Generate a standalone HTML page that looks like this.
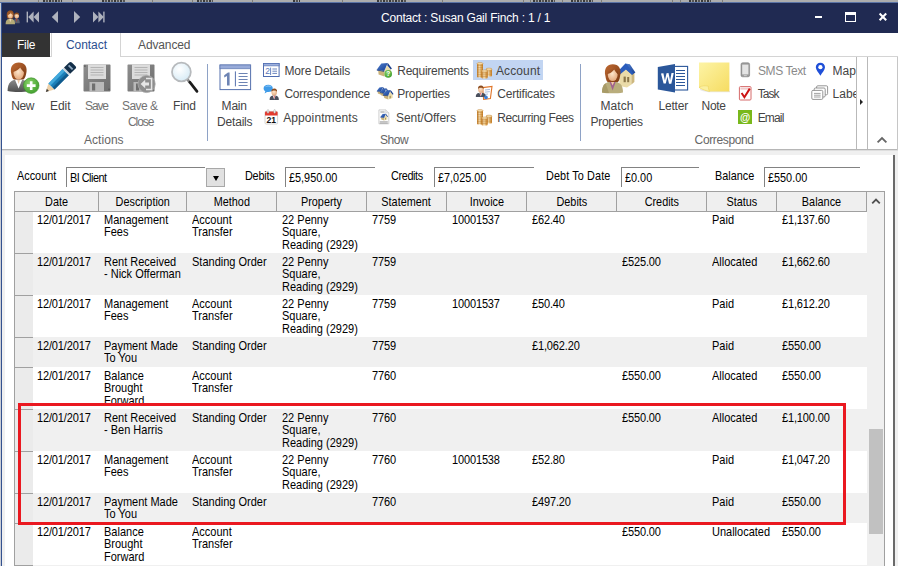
<!DOCTYPE html>
<html>
<head>
<meta charset="utf-8">
<title>Contact : Susan Gail Finch : 1 / 1</title>
<style>
*{box-sizing:border-box;margin:0;padding:0}
html,body{width:898px;height:566px;overflow:hidden;background:#f0f0f0;font-family:"Liberation Sans",sans-serif;}
.a{position:absolute}
.t{position:absolute;white-space:nowrap;line-height:14px}
/* top remnant of window behind */
#behind{left:0;top:0;width:898px;height:3px;background:linear-gradient(#adadad 0 2px,#5b74a6 2px 3px)}
#titlebar{left:1px;top:3px;width:897px;height:30px;background:#202a52}
#title{left:381px;top:10px;font-size:12px;color:#fff;letter-spacing:-0.15px}
#edgeL0{left:0;top:3px;width:1px;height:563px;background:#c9cdd6}
#edgeL1{left:1px;top:3px;width:1.3px;height:563px;background:#34528f}
/* ribbon */
#ribbon{left:2px;top:33px;width:896px;height:117px;background:#fff}
#tabline{left:2px;top:56px;width:896px;height:1px;background:#d4d4d4}
#filetab{left:2px;top:33px;width:48px;height:24px;background:#333}
#contacttab{left:51px;top:33px;width:70px;height:24px;background:#fff;border:1px solid #d4d4d4;border-bottom:none;border-top:none}
.rt{font-size:12px;color:#444}
.tab{font-size:12px}
.gl{font-size:12px;color:#666}
.vsep{width:1px;top:64px;height:77px;background:#8ea2c6}
#ribbottom{left:2px;top:149px;width:896px;height:2px;background:linear-gradient(#b6b6b6 0 1px,#dedede 1px 2px)}
/* form panel */
#panel{left:5px;top:155px;width:888px;height:411px;background:#fff}
.f{font-size:11.9px;color:#000;line-height:12px;transform-origin:0 0;transform:scaleX(.913)}
.inp{height:20px;border-left:1px solid #828282;border-top:1px solid #828282;background:#fff}
/* grid */
#grid{left:14px;top:191px;width:871px;height:375px;border-left:1px solid #a0a0a0;border-top:1px solid #a0a0a0;border-right:1px solid #a0a0a0;background:#fff;overflow:hidden}
.hc{position:absolute;top:0;height:20px;background:#efefef;border-right:1px solid #a0a0a0;border-bottom:1px solid #a0a0a0;font-size:11.9px;line-height:21px;text-align:center}
.hc span{display:inline-block;transform:scaleX(.913)}
.row{position:absolute;left:0;width:852px}
.row.alt{background:#f0f0f0}
.rh{position:absolute;left:0;top:0;width:18px;height:100%;background:#ebebeb;border-top:1px solid #a0a0a0}
.c{position:absolute;top:2.8px;font-size:11.9px;line-height:12.4px;color:#000;white-space:nowrap;transform-origin:0 0;transform:scaleX(.925)}
.c.n{letter-spacing:-0.15px}
</style>
</head>
<body>
<div class="a" id="behind"></div>
<div class="a" style="left:43px;top:0;width:19px;height:2px;background:repeating-linear-gradient(90deg,#3a3a3a 0 2px,#a0a0a0 2px 3px,#555 3px 5px,#ababab 5px 6px)"></div>
<div class="a" style="left:102px;top:0;width:23px;height:2px;background:repeating-linear-gradient(90deg,#3a3a3a 0 2px,#a0a0a0 2px 3px,#555 3px 5px,#ababab 5px 6px)"></div>
<div class="a" style="left:197px;top:0;width:16px;height:2px;background:repeating-linear-gradient(90deg,#3a3a3a 0 2px,#a0a0a0 2px 3px,#555 3px 5px,#ababab 5px 6px)"></div>
<div class="a" style="left:293px;top:0;width:7px;height:2px;background:repeating-linear-gradient(90deg,#3a3a3a 0 2px,#a0a0a0 2px 3px,#555 3px 5px,#ababab 5px 6px)"></div>
<div class="a" style="left:377px;top:0;width:29px;height:2px;background:repeating-linear-gradient(90deg,#3a3a3a 0 2px,#a0a0a0 2px 3px,#555 3px 5px,#ababab 5px 6px)"></div>
<div class="a" style="left:533px;top:0;width:22px;height:2px;background:repeating-linear-gradient(90deg,#3a3a3a 0 2px,#a0a0a0 2px 3px,#555 3px 5px,#ababab 5px 6px)"></div>
<div class="a" style="left:571px;top:0;width:22px;height:2px;background:repeating-linear-gradient(90deg,#3a3a3a 0 2px,#a0a0a0 2px 3px,#555 3px 5px,#ababab 5px 6px)"></div>
<div class="a" style="left:689px;top:0;width:22px;height:2px;background:repeating-linear-gradient(90deg,#3a3a3a 0 2px,#a0a0a0 2px 3px,#555 3px 5px,#ababab 5px 6px)"></div>
<div class="a" style="left:38px;top:0;width:1px;height:3px;background:#7d7d7d"></div>
<div class="a" style="left:72px;top:0;width:1px;height:3px;background:#7d7d7d"></div>
<div class="a" style="left:152px;top:0;width:1px;height:3px;background:#7d7d7d"></div>
<div class="a" style="left:192px;top:0;width:1px;height:3px;background:#7d7d7d"></div>
<div class="a" style="left:252px;top:0;width:1px;height:3px;background:#7d7d7d"></div>
<div class="a" style="left:342px;top:0;width:1px;height:3px;background:#7d7d7d"></div>
<div class="a" style="left:442px;top:0;width:1px;height:3px;background:#7d7d7d"></div>
<div class="a" style="left:523px;top:0;width:1px;height:3px;background:#7d7d7d"></div>
<div class="a" style="left:530px;top:0;width:1px;height:3px;background:#7d7d7d"></div>
<div class="a" style="left:562px;top:0;width:1px;height:3px;background:#7d7d7d"></div>
<div class="a" style="left:601px;top:0;width:1px;height:3px;background:#7d7d7d"></div>
<div class="a" style="left:672px;top:0;width:1px;height:3px;background:#7d7d7d"></div>
<div class="a" style="left:680px;top:0;width:1px;height:3px;background:#7d7d7d"></div>
<div class="a" style="left:722px;top:0;width:1px;height:3px;background:#7d7d7d"></div>
<div class="a" id="titlebar"></div>
<div class="a" id="edgeL0"></div>
<div class="a" id="edgeL1"></div>

<!-- TITLE ICONS -->
<svg class="a" style="left:4px;top:8px" width="18" height="18" viewBox="0 0 18 18">
 <defs><radialGradient id="sk" cx="50%" cy="40%" r="60%"><stop offset="0" stop-color="#fbe0c0"/><stop offset="1" stop-color="#e5a878"/></radialGradient></defs>
 <!-- back man -->
 <path d="M9.5 15.2 C9.5 11.6 11 10.6 12.6 10.6 C14.4 10.6 15.8 11.8 15.8 15.2 Z" fill="#5a5f6e"/>
 <path d="M12.1 10.8 L12.7 14.6 L13.3 10.8 Z" fill="#c0392b"/>
 <ellipse cx="12.7" cy="7.8" rx="2.3" ry="2.7" fill="url(#sk)"/>
 <path d="M10.3 7.4 C10.2 5 11.6 4.3 12.8 4.4 C14.4 4.5 15.2 5.6 15 7.4 C14.4 6.4 13.6 6 12.6 6.2 C11.6 6 10.8 6.4 10.3 7.4Z" fill="#8a4b1e"/>
 <!-- front woman -->
 <path d="M1.6 16.2 C1.6 12 3.6 10.8 6.3 10.8 C9 10.8 11 12 11 16.2 Z" fill="#b5ab78"/>
 <path d="M5.2 11 L6.3 14.2 L7.4 11 Z" fill="#f1d8b8"/>
 <path d="M2.9 8.4 C2.2 4.2 4.3 2.6 6.4 2.6 C8.8 2.6 10.4 4.4 9.6 8.6 C9.4 10 8.8 10.6 8.6 10.6 L4 10.6 C3.6 10.6 3.1 9.8 2.9 8.4Z" fill="#9a5524"/>
 <ellipse cx="6.3" cy="7.6" rx="2.5" ry="3" fill="url(#sk)"/>
 <path d="M3.7 7 C4 4.6 5.4 4.2 6.6 4.4 C8 4.6 8.8 5.6 8.9 7 C8 6.4 7.2 5.6 6.8 5 C6 6 4.8 6.6 3.7 7Z" fill="#9a5524"/>
</svg>
<svg class="a" style="left:26px;top:11px" width="80" height="12" viewBox="0 0 80 12">
 <g fill="#aeb2bd">
  <rect x="0.6" y="0.6" width="1.4" height="10.8"/>
  <path d="M7.6 0.6 L7.6 11.4 L2.2 6 Z"/><path d="M13 0.6 L13 11.4 L7.6 6 Z"/>
  <path d="M32 0 L32 12 L25.8 6 Z"/>
  <path d="M48 0 L48 12 L54.2 6 Z"/>
  <path d="M67 0.6 L67 11.4 L72.4 6 Z"/><path d="M72.4 0.6 L72.4 11.4 L77.8 6 Z"/>
  <rect x="77.2" y="0.6" width="1.4" height="10.8"/>
 </g>
</svg>
<div class="a" style="left:815px;top:16px;width:7px;height:2px;background:#fff"></div>
<div class="a" style="left:845px;top:12px;width:11px;height:10px;border:1px solid #fff;border-top:3px solid #fff"></div>
<svg class="a" style="left:878px;top:12px" width="10" height="10" viewBox="0 0 10 10"><path d="M1.6 1.6 L8.2 8.2 M8.2 1.6 L1.6 8.2" stroke="#fff" stroke-width="2.1" fill="none"/></svg>
<!-- /TITLE ICONS -->
<!-- RIBBON -->
<div class="a" id="ribbon"></div>
<div class="a" id="tabline"></div>
<div class="a" id="filetab"></div>
<div class="a" id="contacttab"></div>

<div class="a" style="left:473px;top:60px;width:70px;height:20px;background:#c2d5f2"></div>
<!-- ICONS-LARGE -->
<svg width="0" height="0" style="position:absolute"><defs>
 <radialGradient id="skin" cx="45%" cy="40%" r="65%"><stop offset="0" stop-color="#fde6cc"/><stop offset="1" stop-color="#e3a577"/></radialGradient>
 <linearGradient id="hair" x1="0" y1="0" x2="1" y2="1"><stop offset="0" stop-color="#c06a32"/><stop offset="1" stop-color="#7a3a14"/></linearGradient>
 <linearGradient id="suit" x1="0" y1="0" x2="0" y2="1"><stop offset="0" stop-color="#8c8c8c"/><stop offset="1" stop-color="#4e4e4e"/></linearGradient>
 <radialGradient id="grn" cx="40%" cy="35%" r="70%"><stop offset="0" stop-color="#8ad36a"/><stop offset="1" stop-color="#3f9e2c"/></radialGradient>
 <linearGradient id="flop" x1="0" y1="0" x2="1" y2="1"><stop offset="0" stop-color="#8d8d8d"/><stop offset="1" stop-color="#6e6e6e"/></linearGradient>
 <linearGradient id="pen" x1="0" y1="0" x2="1" y2="1"><stop offset="0" stop-color="#2f9bd1"/><stop offset="0.5" stop-color="#1b7fb8"/><stop offset="1" stop-color="#0b5688"/></linearGradient>
 <radialGradient id="lens" cx="40%" cy="35%" r="70%"><stop offset="0" stop-color="#ffffff"/><stop offset="1" stop-color="#d5eaf5"/></radialGradient>
 <linearGradient id="note" x1="0" y1="0" x2="1" y2="1"><stop offset="0" stop-color="#fdf4a6"/><stop offset="1" stop-color="#f6dc62"/></linearGradient>
 <linearGradient id="gold" x1="0" y1="0" x2="1" y2="0"><stop offset="0" stop-color="#c0761c"/><stop offset="0.4" stop-color="#fbe6bc"/><stop offset="0.55" stop-color="#f0c987"/><stop offset="1" stop-color="#c97f24"/></linearGradient>
 <linearGradient id="roof" x1="0" y1="0" x2="1" y2="1"><stop offset="0" stop-color="#4f7fd0"/><stop offset="1" stop-color="#173f91"/></linearGradient>
<g id="house">
 <path d="M2.2 8.4 L8.4 9.2 L8.4 14.4 L2.6 12.4 Z" fill="#c9b27a"/>
 <path d="M8.4 8.6 L11.2 3.4 L14.6 7.4 L14.6 12.4 L8.4 14.4 Z" fill="#eadba8"/>
 <rect x="10.4" y="9.4" width="1.3" height="3.6" fill="#8a7a4a" transform="skewY(-14) translate(0,2.7)"/>
 <path d="M0.7 7.8 L5.3 1.5 L11.8 0.9 L8.2 8.9 Z" fill="url(#roof)"/>
 <path d="M11.8 0.9 L15.9 6.4 L14.8 7.6 L11.2 3.2 Z" fill="#183c8a"/>
 <path d="M0.7 7.8 L8.2 8.9 L8.4 9.8 L0.9 8.6Z" fill="#123277"/>
</g>
</defs></svg>
<!-- New -->
<svg class="a" style="left:7px;top:61px" width="34" height="34" viewBox="0 0 34 34">
 <path d="M0.6 30 C0.6 21.5 4.5 18.6 11.6 18.6 C18.6 18.6 22.4 21.5 22.4 30 C16 31.4 7 31.4 0.6 30Z" fill="url(#suit)"/>
 <path d="M8 18.8 L11.6 27.5 L15.2 18.8 Z" fill="#fff"/>
 <path d="M10.3 19 L11.6 23 L12.9 19Z" fill="#f0c9a4"/>
 <path d="M4.4 13.2 C2.4 5.6 6.2 1.6 11.8 1.6 C17.6 1.6 21.2 5.6 19 13.6 C18.4 16.6 17 18.4 16.4 18.4 L7 18.4 C6.2 18.4 4.8 16 4.4 13.2Z" fill="url(#hair)"/>
 <ellipse cx="11.7" cy="12" rx="5.2" ry="6.4" fill="url(#skin)"/>
 <path d="M6 11 C6.4 6.4 9 4.6 12 4.8 C15.2 5 17.2 7 17.5 11.4 C15.6 10 14 8.2 13.2 6.6 C11.6 8.8 9 10.4 6 11Z" fill="url(#hair)"/>
 <circle cx="24.2" cy="24.6" r="7.8" fill="url(#grn)" stroke="#3c8f2a" stroke-width="0.6"/>
 <path d="M24.2 20.2 V29 M19.8 24.6 H28.6" stroke="#fff" stroke-width="2.6" fill="none"/>
</svg>
<!-- Edit -->
<svg class="a" style="left:45px;top:61px" width="32" height="32" viewBox="0 0 32 32">
 <path d="M0.8 31 L3.4 22.4 L9.6 28.4 Z" fill="#ecd0a8"/>
 <path d="M0.8 31 L1.8 27.8 L4 30 Z" fill="#3a3a3a"/>
 <path d="M3.4 22.4 L17.6 8 L23.8 14.2 L9.6 28.4 Z" fill="url(#pen)"/>
 <path d="M3.4 22.4 L17.6 8 L19.8 10.2 L5.6 24.6 Z" fill="#4db4e6" opacity="0.75"/>
 <path d="M7.6 26.6 L21.8 12.2 L23.8 14.2 L9.6 28.4 Z" fill="#0a4a78" opacity="0.6"/>
 <path d="M17.6 8 L19 6.6 L25.2 12.8 L23.8 14.2 Z" fill="#c9d3dc"/>
 <path d="M19 6.6 L24.2 1.4 C25 0.7 26 0.7 26.8 1.4 L30.6 5.2 C31.3 6 31.3 7 30.6 7.6 L25.2 12.8 Z" fill="#14304a"/>
 <path d="M23.6 4.4 L27.6 8.4" stroke="#8fa8c0" stroke-width="1.8"/>
</svg>
<!-- Save -->
<svg class="a" style="left:83px;top:64px" width="28" height="28" viewBox="0 0 28 28">
 <path d="M0.5 1.5 C0.5 0.9 0.9 0.5 1.5 0.5 L26.5 0.5 C27.1 0.5 27.5 0.9 27.5 1.5 L27.5 26.5 C27.5 27.1 27.1 27.5 26.5 27.5 L1.5 27.5 C0.9 27.5 0.5 27.1 0.5 26.5Z" fill="url(#flop)"/>
 <rect x="5" y="0.5" width="18" height="14.5" fill="#dcdcdc"/>
 <path d="M7.5 3.5 H20.5 M7.5 6 H20.5 M7.5 8.5 H20.5 M7.5 11 H20.5" stroke="#b4b4b4" stroke-width="1"/>
 <rect x="6.5" y="18" width="14.5" height="9.5" fill="#b9b9b9"/>
 <rect x="9" y="19.5" width="3.2" height="7" fill="#6f6f6f"/>
 <rect x="1.2" y="1.4" width="1.4" height="1.4" fill="#555"/><rect x="25.4" y="24.6" width="1.4" height="1.4" fill="#555"/>
</svg>
<!-- Save & Close -->
<svg class="a" style="left:127px;top:64px" width="30" height="30" viewBox="0 0 30 30">
 <path d="M0.5 1.5 C0.5 0.9 0.9 0.5 1.5 0.5 L26.5 0.5 C27.1 0.5 27.5 0.9 27.5 1.5 L27.5 26.5 C27.5 27.1 27.1 27.5 26.5 27.5 L1.5 27.5 C0.9 27.5 0.5 27.1 0.5 26.5Z" fill="url(#flop)"/>
 <rect x="5" y="0.5" width="18" height="14.5" fill="#dcdcdc"/>
 <path d="M7.5 3.5 H20.5 M7.5 6 H20.5 M7.5 8.5 H20.5 M7.5 11 H20.5" stroke="#b4b4b4" stroke-width="1"/>
 <rect x="6.5" y="18" width="8" height="9.5" fill="#b9b9b9"/>
 <rect x="9" y="19.5" width="3.2" height="7" fill="#6f6f6f"/>
 <circle cx="19.6" cy="20" r="8.6" fill="#8e8e8e" stroke="#a8a8a8" stroke-width="0.8"/>
 <path d="M19 14.6 H24.6 V25.4 H19" fill="none" stroke="#e6e6e6" stroke-width="1.5"/>
 <path d="M13.6 20 L18.2 15.8 L18.2 18.4 L22 18.4 L22 21.6 L18.2 21.6 L18.2 24.2 Z" fill="#e6e6e6"/>
</svg>
<!-- Find -->
<svg class="a" style="left:169px;top:61px" width="32" height="34" viewBox="0 0 32 34">
 <circle cx="12.4" cy="11" r="9.4" fill="url(#lens)" stroke="#b7babd" stroke-width="1.8"/>
 <path d="M18.6 18.6 L21 21.6" stroke="#8a8a8a" stroke-width="2.6"/>
 <path d="M20.8 21.2 L28 30.4" stroke="#1c1c1c" stroke-width="2.7" stroke-linecap="round"/>
</svg>
<!-- Main Details -->
<svg class="a" style="left:219px;top:64px" width="33" height="28" viewBox="0 0 33 28">
 <rect x="1" y="1" width="30.6" height="24.6" fill="#fff" stroke="#5570ad" stroke-width="1"/>
 <rect x="1" y="1" width="30.6" height="3.8" fill="#98abd9" stroke="#5570ad" stroke-width="0.6"/>
 <path d="M10.6 8.6 L10.6 21.4 L8 21.4 L8 12 L5.2 13.4 L5.2 11.2 L9 8.6 Z" fill="#6d84b4"/>
 <path d="M16.4 7.4 V22.4" stroke="#5570ad" stroke-width="1"/>
 <path d="M19.6 9.5 H28.6 M19.6 12.5 H28.6 M19.6 15.5 H28.6 M19.6 18.5 H28.6 M19.6 21.5 H28.6" stroke="#6d84b4" stroke-width="1"/>
</svg>
<!-- /ICONS-LARGE -->
<!-- ICONS-SMALL -->
<!-- More Details -->
<svg class="a" style="left:263px;top:62.6px" width="17" height="15" viewBox="0 0 17 15">
 <rect x="0.5" y="0.5" width="15.6" height="13" fill="#fff" stroke="#4f6cb0" stroke-width="1"/>
 <rect x="0.5" y="0.5" width="15.6" height="2.4" fill="#9db0dd" stroke="#4f6cb0" stroke-width="0.6"/>
 <text x="2.2" y="11.4" font-family="Liberation Sans" font-size="8.5" fill="#5b78b8">2</text>
 <path d="M7.6 4.6 V12" stroke="#5b78b8" stroke-width="0.9"/>
 <path d="M9.4 6 H14 M9.4 8.2 H14 M9.4 10.4 H14" stroke="#5b78b8" stroke-width="0.9"/>
</svg>
<!-- Correspondence -->
<svg class="a" style="left:262px;top:84px" width="18" height="17" viewBox="0 0 18 17">
 <path d="M1.6 4.4 C1.6 2.2 3.6 0.8 6.2 0.8 C8.8 0.8 10.8 2.2 10.8 4.4 C10.8 6.6 8.8 8 6.2 8 C5.8 8 5.4 8 5 7.9 L2.6 9.6 L3.3 7.2 C2.2 6.5 1.6 5.5 1.6 4.4Z" fill="#3f9be8"/>
 <path d="M3 3.2 C3.6 2.2 5 1.6 6.4 1.6 C7.8 1.6 9 2.2 9.6 3 C8.6 2.6 7.4 2.4 6.2 2.4 C5 2.4 3.8 2.7 3 3.2Z" fill="#8cc6f6"/>
 <path d="M7.6 16 C7.6 12.6 9.2 11.6 12.2 11.6 C15.2 11.6 16.8 12.6 16.8 16 Z" fill="#4a4f5c"/>
 <path d="M10.8 11.7 L12.2 15.6 L13.6 11.7 Z" fill="#fff"/>
 <path d="M11.7 11.8 L12.2 15.2 L12.7 11.8 Z" fill="#d3262a"/>
 <ellipse cx="12.2" cy="8.4" rx="2.7" ry="3.1" fill="url(#skin)"/>
 <path d="M9.4 8 C9.2 5.4 10.6 4.4 12.4 4.4 C14.2 4.4 15.4 5.6 15 8 C14.4 7 13.6 6.4 12.2 6.6 C10.8 6.4 10 7 9.4 8Z" fill="#8a4b1e"/>
</svg>
<!-- Appointments -->
<svg class="a" style="left:264px;top:109px" width="15" height="16" viewBox="0 0 15 16">
 <rect x="1" y="2.4" width="12.6" height="12.6" rx="1.2" fill="#fff" stroke="#c9c9c9" stroke-width="0.8"/>
 <path d="M1 3.6 C1 2.9 1.5 2.4 2.2 2.4 L12.4 2.4 C13.1 2.4 13.6 2.9 13.6 3.6 L13.6 6.6 L1 6.6Z" fill="#e23b30"/>
 <rect x="3.2" y="0.6" width="1.6" height="3.6" rx="0.8" fill="#f3f3f3" stroke="#999" stroke-width="0.4"/>
 <rect x="9.8" y="0.6" width="1.6" height="3.6" rx="0.8" fill="#f3f3f3" stroke="#999" stroke-width="0.4"/>
 <text x="7.3" y="14" text-anchor="middle" font-family="Liberation Sans" font-weight="bold" font-size="8.6" fill="#111">21</text>
</svg>
<!-- Requirements -->
<svg class="a" style="left:376px;top:62px" width="17" height="17" viewBox="0 0 17 17">
 <use href="#house"/>
 <circle cx="12.2" cy="11.9" r="3.8" fill="url(#grn)"/>
 <text x="12.2" y="14.3" text-anchor="middle" font-family="Liberation Sans" font-weight="bold" font-size="6.6" fill="#fff">?</text>
</svg>
<!-- Properties -->
<svg class="a" style="left:376px;top:85px" width="18" height="17" viewBox="0 0 18 17">
 <use href="#house" transform="translate(0.4,1.6) scale(0.56)"/>
 <use href="#house" transform="translate(3.4,2.8) scale(0.6)"/>
 <use href="#house" transform="translate(6.4,4.4) scale(0.7)"/>
</svg>
<!-- Sent/Offers -->
<svg class="a" style="left:378px;top:109px" width="13" height="16" viewBox="0 0 13 16">
 <path d="M0.9 0.9 L7.8 0.9 L10.8 3.8 L10.8 14.8 L0.9 14.8 Z" fill="#fcfcfc" stroke="#c4c4c4" stroke-width="0.8"/>
 <path d="M7.8 0.9 L7.8 3.8 L10.8 3.8" fill="#ececec" stroke="#c4c4c4" stroke-width="0.6"/>
 <path d="M2.4 3 H6.6" stroke="#8c8c8c" stroke-width="0.9"/>
 <use href="#house" transform="translate(2,4.2) scale(0.5)"/>
 <path d="M1.8 12.6 H9.8" stroke="#b4b4b4" stroke-width="0.9"/><path d="M1.8 14 H9.8" stroke="#8c8c8c" stroke-width="0.9"/>
</svg>
<!-- Account coins -->
<svg class="a" style="left:476px;top:62px" width="17" height="17" viewBox="0 0 17 17">
 <g id="coins">
 <rect x="1" y="1" width="6" height="14.6" rx="1" fill="url(#gold)"/>
 <ellipse cx="4" cy="1.6" rx="3" ry="1.1" fill="#f6dfae" stroke="#b97a2c" stroke-width="0.4"/>
 <path d="M1 3.6 H7 M1 5.4 H7 M1 7.2 H7 M1 9 H7 M1 10.8 H7 M1 12.6 H7 M1 14.2 H7" stroke="#a96a20" stroke-width="0.5" opacity="0.8"/>
 <rect x="10" y="6.6" width="6" height="8" rx="1" fill="url(#gold)"/>
 <ellipse cx="13" cy="7.2" rx="3" ry="1.1" fill="#f6dfae" stroke="#b97a2c" stroke-width="0.4"/>
 <path d="M10 9.2 H16 M10 11 H16 M10 12.8 H16" stroke="#a96a20" stroke-width="0.5" opacity="0.8"/>
 <rect x="5.6" y="8.4" width="6" height="8" rx="1" fill="url(#gold)"/>
 <ellipse cx="8.6" cy="9" rx="3" ry="1.1" fill="#f6dfae" stroke="#b97a2c" stroke-width="0.4"/>
 <path d="M5.6 11 H11.6 M5.6 12.8 H11.6 M5.6 14.6 H11.6" stroke="#a96a20" stroke-width="0.5" opacity="0.8"/>
 </g>
</svg>
<svg class="a" style="left:476px;top:109px" width="17" height="17" viewBox="0 0 17 17"><use href="#coins"/></svg>
<!-- Certificates -->
<svg class="a" style="left:475px;top:84px" width="18" height="17" viewBox="0 0 18 17">
 <path d="M7.6 3.6 L17 2.4 L15.4 14.6 L8.6 15.4 Z" fill="#fff" stroke="#e0762a" stroke-width="1.1"/>
 <path d="M10 6 L15 5.4 M9.8 8.2 L14.8 7.6 M9.6 10.4 L13 10" stroke="#8aa0c8" stroke-width="0.7"/>
 <path d="M0.8 13 C0.8 9.6 2.6 8.8 5.8 8.8 C9 8.8 10.8 9.6 10.8 13 Z" fill="#4a4f5c"/>
 <path d="M4.4 8.9 L5.8 12.6 L7.2 8.9 Z" fill="#fff"/>
 <path d="M5.3 9 L5.8 12.2 L6.3 9 Z" fill="#d3262a"/>
 <ellipse cx="5.8" cy="5.6" rx="2.7" ry="3.1" fill="url(#skin)"/>
 <path d="M3 5.2 C2.8 2.6 4.2 1.6 6 1.6 C7.8 1.6 9 2.8 8.6 5.2 C8 4.2 7.2 3.6 5.8 3.8 C4.4 3.6 3.6 4.2 3 5.2Z" fill="#8a4b1e"/>
 <circle cx="11" cy="13.4" r="1.8" fill="#3c7fd8"/>
</svg>
<!-- SMS -->
<svg class="a" style="left:740px;top:62px" width="11" height="16" viewBox="0 0 11 16">
 <rect x="1" y="0.8" width="8.6" height="14" rx="1.6" fill="#9b9b9b" stroke="#7e7e7e" stroke-width="0.6"/>
 <rect x="2.2" y="2.6" width="6.2" height="9.8" fill="#e4e4e4"/>
 <rect x="3.8" y="13.2" width="3" height="0.9" fill="#d4d4d4"/>
</svg>
<!-- Task -->
<svg class="a" style="left:738px;top:85px" width="15" height="16" viewBox="0 0 15 16">
 <rect x="1.4" y="1.6" width="11.6" height="13.4" rx="1" fill="#fff" stroke="#d66a6a" stroke-width="1"/>
 <rect x="2.4" y="2.6" width="9.6" height="2" fill="#f1c9c9"/>
 <path d="M3.6 8 L6.4 12.2 L11.8 3.6" fill="none" stroke="#cc1414" stroke-width="2"/>
</svg>
<!-- Email -->
<svg class="a" style="left:738px;top:110px" width="14" height="14" viewBox="0 0 14 14">
 <rect x="0" y="0" width="14" height="14" fill="#79b81c"/>
 <text x="7" y="10.6" text-anchor="middle" font-family="Liberation Sans" font-weight="bold" font-size="10.5" fill="#fff">@</text>
</svg>
<!-- Map -->
<svg class="a" style="left:815px;top:62px" width="11" height="15" viewBox="0 0 11 15">
 <path d="M5.4 0.8 C8 0.8 10 2.8 10 5.2 C10 8 7 10.6 5.4 13.8 C3.8 10.6 0.8 8 0.8 5.2 C0.8 2.8 2.8 0.8 5.4 0.8Z" fill="#1f4fd8"/>
 <circle cx="5.4" cy="5.2" r="2.1" fill="#fff"/>
</svg>
<!-- Label -->
<svg class="a" style="left:811px;top:85px" width="18" height="16" viewBox="0 0 18 16">
 <g fill="#fff" stroke="#8a8a8a" stroke-width="0.9">
 <rect x="5.6" y="0.8" width="11" height="9" rx="1.2"/>
 <rect x="3.2" y="3" width="11" height="9" rx="1.2"/>
 <rect x="0.8" y="5.4" width="11" height="9" rx="1.2"/>
 </g>
 <path d="M3 8.4 H9.6 M3 10.2 H9.6 M3 12 H9.6" stroke="#8a8a8a" stroke-width="0.8"/>
</svg>
<!-- Match Properties -->
<svg class="a" style="left:601px;top:62px" width="35" height="32" viewBox="0 0 35 32">
 <path d="M18.4 11.6 L25 5 L30.4 11.6 L30.4 22.6 L26 25.6 L18.4 24 Z" fill="#eadba8"/>
 <path d="M30.4 11.6 L33.4 10.4 L33.4 20 L30.4 22.6 Z" fill="#cdb77e"/>
 <rect x="22.6" y="14.6" width="2.2" height="5.6" fill="#8a7648"/><rect x="26.2" y="15" width="2" height="5.2" fill="#8a7648"/>
 <path d="M24.4 1.4 L28.8 2.2 L34.4 10.4 L31 12.8 L25 7.6 Z" fill="url(#roof)"/>
 <path d="M24.4 1.4 L15.8 10.6 L18.6 12.8 L25 7.6 L31 12.8 L32.4 11.8 L26 2.6Z" fill="#2a5cbc"/>
 <path d="M1 30.4 C1 22.6 4.6 19.4 11.6 19.4 C18.6 19.4 22 22.6 22 30.4 C16 31.6 7 31.6 1 30.4Z" fill="#b9ad7c"/>
 <path d="M1 30.4 C1 26 2 23 4.6 21.2 L8 30.9 C5 30.9 3 30.8 1 30.4Z" fill="#a89b68"/>
 <path d="M8.4 19.6 L11.6 28.4 L14.8 19.6 Z" fill="#a0628e"/>
 <path d="M9.8 19.6 L11.6 23.6 L13.4 19.6Z" fill="#f0c9a4"/>
 <path d="M4.4 14 C2.6 6.6 6.2 2.2 11.8 2.2 C17.6 2.2 21 6.6 19 14.4 C18.6 17.6 17.4 20 16.6 20 L6.8 20 C6 20 4.8 17 4.4 14Z" fill="url(#hair)"/>
 <ellipse cx="11.7" cy="12.8" rx="4.9" ry="6.3" fill="url(#skin)"/>
 <path d="M6.2 12 C6.6 7.4 9 5.4 12 5.6 C15 5.8 17 7.8 17.2 12.2 C15.4 10.8 14 9 13.2 7.4 C11.6 9.6 9 11.4 6.2 12Z" fill="url(#hair)"/>
</svg>
<!-- Letter (Word) -->
<svg class="a" style="left:657px;top:63px" width="32" height="31" viewBox="0 0 32 31">
 <rect x="14" y="3.4" width="16.6" height="23.6" fill="#fff" stroke="#2b579a" stroke-width="1.1"/>
 <path d="M19 7.5 H28 M19 10.5 H28 M19 13.5 H28 M19 16.5 H28 M19 19.5 H28 M19 22.5 H28" stroke="#2b579a" stroke-width="1.2"/>
 <path d="M0.8 4 L18 1 L18 29.6 L0.8 26.6 Z" fill="#2b579a"/>
 <path d="M4 10.4 L6.4 10.3 L7.9 17.4 L9.5 10.2 L11.5 10.1 L13.1 17.4 L14.5 10 L16.8 9.9 L14.3 20.8 L12 20.7 L10.4 13.6 L8.8 20.6 L6.6 20.5 Z" fill="#fff"/>
</svg>
<!-- Note -->
<svg class="a" style="left:697px;top:61px" width="34" height="33" viewBox="0 0 34 33">
 <path d="M3 29 C6 30.4 10 30.8 12 31.2 L33 31.2 L33 30 L3 28Z" fill="#e2e2e2" opacity="0.8"/>
 <path d="M2 1.4 L32.4 1.4 L32.4 30.4 L12.6 30.4 C9 29.8 5.4 28.6 2 26.4 Z" fill="url(#note)"/>
 <path d="M2 26.4 C5 24.4 8 24.6 11.4 25.2 C11.2 27 11.6 28.8 12.6 30.4 C9 29.8 5.4 28.6 2 26.4Z" fill="#fbf0a0" stroke="#e9cf58" stroke-width="0.5"/>
</svg>
<!-- /ICONS-SMALL -->

<!-- RTEXT -->
<div class="t rt" style="left:11.2px;top:99px;letter-spacing:-0.41px;">New</div>
<div class="t rt" style="left:50.0px;top:99px;letter-spacing:-0.03px;">Edit</div>
<div class="t rt" style="left:85.0px;top:99px;letter-spacing:-1.12px;color:#727272">Save</div>
<div class="t rt" style="left:122.0px;top:99px;letter-spacing:-0.54px;color:#727272">Save &amp;</div>
<div class="t rt" style="left:128.0px;top:115px;letter-spacing:-1.07px;color:#727272">Close</div>
<div class="t rt" style="left:173.0px;top:99px;letter-spacing:-0.11px;">Find</div>
<div class="t rt" style="left:221.6px;top:99px;letter-spacing:-0.21px;">Main</div>
<div class="t rt" style="left:217.0px;top:115px;letter-spacing:-0.18px;">Details</div>
<div class="t gl" style="left:84.0px;top:132.5px;letter-spacing:0.04px;">Actions</div>
<div class="t rt" style="left:284.4px;top:64px;letter-spacing:-0.14px;">More Details</div>
<div class="t rt" style="left:284.4px;top:87px;letter-spacing:-0.23px;">Correspondence</div>
<div class="t rt" style="left:283.2px;top:111px;letter-spacing:0.10px;">Appointments</div>
<div class="t rt" style="left:397.3px;top:64px;letter-spacing:-0.27px;">Requirements</div>
<div class="t rt" style="left:397.3px;top:87px;letter-spacing:-0.22px;">Properties</div>
<div class="t rt" style="left:396.0px;top:111px;letter-spacing:-0.05px;">Sent/Offers</div>
<div class="t rt" style="left:496.0px;top:64px;letter-spacing:0.11px;">Account</div>
<div class="t rt" style="left:497.2px;top:87px;letter-spacing:-0.20px;">Certificates</div>
<div class="t rt" style="left:497.2px;top:111px;letter-spacing:-0.40px;">Recurring Fees</div>
<div class="t gl" style="left:380.0px;top:132.5px;letter-spacing:-0.48px;">Show</div>
<div class="t rt" style="left:600.5px;top:99px;letter-spacing:0.05px;">Match</div>
<div class="t rt" style="left:590.4px;top:115px;letter-spacing:-0.23px;">Properties</div>
<div class="t rt" style="left:658.5px;top:99px;letter-spacing:-0.20px;">Letter</div>
<div class="t rt" style="left:701.6px;top:99px;letter-spacing:-0.32px;">Note</div>
<div class="t rt" style="left:758.0px;top:64px;letter-spacing:-0.42px;color:#8a8a8a">SMS Text</div>
<div class="t rt" style="left:757.7px;top:87px;letter-spacing:-0.96px;">Task</div>
<div class="t rt" style="left:757.7px;top:111px;letter-spacing:-0.83px;">Email</div>
<div class="t gl" style="left:694.6px;top:132.5px;letter-spacing:-0.37px;">Correspond</div>
<div class="t tab" style="left:17.0px;top:38px;letter-spacing:-0.28px;color:#fff">File</div>
<div class="t tab" style="left:66.0px;top:38px;letter-spacing:-0.06px;color:#2b4f8f">Contact</div>
<div class="t tab" style="left:138.0px;top:38px;letter-spacing:-0.12px;color:#555">Advanced</div>
<div class="t tab" style="left:381.0px;top:11.2px;letter-spacing:-0.20px;color:#fff">Contact : Susan Gail Finch : 1 / 1</div>
<!-- /RTEXT -->
<div class="a vsep" style="left:207px"></div>

<div class="a vsep" style="left:580px"></div>

<div class="t rt" style="left:832.6px;top:64px;width:23.4px;overflow:hidden">Map</div>
<div class="t rt" style="left:832.6px;top:87px;width:23.4px;overflow:hidden">Label</div>
<div class="a" style="left:856px;top:57px;width:12px;height:93px;background:#fff;border-left:1px solid #b9b9b9;border-right:1px solid #b9b9b9"></div>
<div class="a" style="left:860px;top:99px;width:0;height:0;border-left:3.5px solid #222;border-top:3.5px solid transparent;border-bottom:3.5px solid transparent"></div>
<svg class="a" style="left:874px;top:134px" width="16" height="12" viewBox="0 0 16 12"><path d="M3.6 8.4 L8 4 L12.4 8.4" fill="none" stroke="#666" stroke-width="1.8"/></svg>
<div class="a" id="ribbottom"></div>

<!-- FORM PANEL -->
<div class="a" id="panel"></div>
<div class="a" style="left:893px;top:155px;width:2px;height:411px;background:#6a6a6a"></div>
<div class="a" style="left:897px;top:57px;width:1px;height:93px;background:#c6c6c6"></div>

<div class="t f" style="left:17px;top:170px">Account</div>
<div class="a inp" style="left:66px;top:167px;width:139px"></div>
<div class="t f" style="left:70px;top:172px;letter-spacing:-0.55px">BI Client</div>
<div class="a" style="left:206px;top:168px;width:19px;height:19px;background:#e1e1e1;border:1px solid #a8a8a8"></div>
<div class="a" style="left:212.8px;top:176px;width:0;height:0;border-top:5.2px solid #000;border-left:3.6px solid transparent;border-right:3.6px solid transparent"></div>
<div class="t f" style="left:245px;top:170px;letter-spacing:-0.25px">Debits</div>
<div class="a inp" style="left:285px;top:167px;width:90px"></div>
<div class="t f" style="left:289px;top:172px">£5,950.00</div>
<div class="t f" style="left:391px;top:170px;letter-spacing:-0.4px">Credits</div>
<div class="a inp" style="left:434px;top:167px;width:100px"></div>
<div class="t f" style="left:438px;top:172px">£7,025.00</div>
<div class="t f" style="left:546px;top:170px;letter-spacing:0.12px">Debt To Date</div>
<div class="a inp" style="left:621px;top:167px;width:78px"></div>
<div class="t f" style="left:625px;top:172px">£0.00</div>
<div class="t f" style="left:715px;top:170px">Balance</div>
<div class="a inp" style="left:764px;top:167px;width:96px"></div>
<div class="t f" style="left:768px;top:172px">£550.00</div>

<!-- GRID -->
<div class="a" id="grid">
<!-- GRIDBODY -->
<div class="hc" style="left:0px;width:84px"><span>Date</span></div>
<div class="hc" style="left:84px;width:88px"><span>Description</span></div>
<div class="hc" style="left:172px;width:90px"><span>Method</span></div>
<div class="hc" style="left:262px;width:90px"><span>Property</span></div>
<div class="hc" style="left:352px;width:80px"><span>Statement</span></div>
<div class="hc" style="left:432px;width:80px"><span>Invoice</span></div>
<div class="hc" style="left:512px;width:90px"><span>Debits</span></div>
<div class="hc" style="left:602px;width:90px"><span>Credits</span></div>
<div class="hc" style="left:692px;width:70px"><span>Status</span></div>
<div class="hc" style="left:762px;width:90px"><span>Balance</span></div>
<div class="row" style="top:19px;height:42px"><div class="rh" style="height:42px"></div>
<div class="c n" style="left:21.799999999999997px">12/01/2017</div>
<div class="c" style="left:89.2px">Management<br>Fees</div>
<div class="c" style="left:177px">Account<br>Transfer</div>
<div class="c" style="left:267px">22 Penny<br>Square,<br>Reading (2929)</div>
<div class="c n" style="left:357px">7759</div>
<div class="c n" style="left:437.4px">10001537</div>
<div class="c n" style="left:517px">£62.40</div>
<div class="c" style="left:697px">Paid</div>
<div class="c n" style="left:767px">£1,137.60</div>
</div>
<div class="row alt" style="top:61px;height:42px"><div class="rh" style="height:42px"></div>
<div class="c n" style="left:21.799999999999997px">12/01/2017</div>
<div class="c" style="left:89.2px">Rent Received<br>- Nick Offerman</div>
<div class="c" style="left:177px">Standing Order</div>
<div class="c" style="left:267px">22 Penny<br>Square,<br>Reading (2929)</div>
<div class="c n" style="left:357px">7759</div>
<div class="c n" style="left:607px">£525.00</div>
<div class="c" style="left:697px">Allocated</div>
<div class="c n" style="left:767px">£1,662.60</div>
</div>
<div class="row" style="top:103px;height:42px"><div class="rh" style="height:42px"></div>
<div class="c n" style="left:21.799999999999997px">12/01/2017</div>
<div class="c" style="left:89.2px">Management<br>Fees</div>
<div class="c" style="left:177px">Account<br>Transfer</div>
<div class="c" style="left:267px">22 Penny<br>Square,<br>Reading (2929)</div>
<div class="c n" style="left:357px">7759</div>
<div class="c n" style="left:437.4px">10001537</div>
<div class="c n" style="left:517px">£50.40</div>
<div class="c" style="left:697px">Paid</div>
<div class="c n" style="left:767px">£1,612.20</div>
</div>
<div class="row alt" style="top:145px;height:30px"><div class="rh" style="height:30px"></div>
<div class="c n" style="left:21.799999999999997px">12/01/2017</div>
<div class="c" style="left:89.2px">Payment Made<br>To You</div>
<div class="c" style="left:177px">Standing Order</div>
<div class="c n" style="left:357px">7759</div>
<div class="c n" style="left:517px">£1,062.20</div>
<div class="c" style="left:697px">Paid</div>
<div class="c n" style="left:767px">£550.00</div>
</div>
<div class="row" style="top:175px;height:42px"><div class="rh" style="height:42px"></div>
<div class="c n" style="left:21.799999999999997px">12/01/2017</div>
<div class="c" style="left:89.2px">Balance<br>Brought<br>Forward</div>
<div class="c" style="left:177px">Account<br>Transfer</div>
<div class="c n" style="left:357px">7760</div>
<div class="c n" style="left:607px">£550.00</div>
<div class="c" style="left:697px">Allocated</div>
<div class="c n" style="left:767px">£550.00</div>
</div>
<div class="row alt" style="top:217px;height:42px"><div class="rh" style="height:42px"></div>
<div class="c n" style="left:21.799999999999997px">12/01/2017</div>
<div class="c" style="left:89.2px">Rent Received<br>- Ben Harris</div>
<div class="c" style="left:177px">Standing Order</div>
<div class="c" style="left:267px">22 Penny<br>Square,<br>Reading (2929)</div>
<div class="c n" style="left:357px">7760</div>
<div class="c n" style="left:607px">£550.00</div>
<div class="c" style="left:697px">Allocated</div>
<div class="c n" style="left:767px">£1,100.00</div>
</div>
<div class="row" style="top:259px;height:42px"><div class="rh" style="height:42px"></div>
<div class="c n" style="left:21.799999999999997px">12/01/2017</div>
<div class="c" style="left:89.2px">Management<br>Fees</div>
<div class="c" style="left:177px">Account<br>Transfer</div>
<div class="c" style="left:267px">22 Penny<br>Square,<br>Reading (2929)</div>
<div class="c n" style="left:357px">7760</div>
<div class="c n" style="left:437.4px">10001538</div>
<div class="c n" style="left:517px">£52.80</div>
<div class="c" style="left:697px">Paid</div>
<div class="c n" style="left:767px">£1,047.20</div>
</div>
<div class="row alt" style="top:301px;height:30px"><div class="rh" style="height:30px"></div>
<div class="c n" style="left:21.799999999999997px">12/01/2017</div>
<div class="c" style="left:89.2px">Payment Made<br>To You</div>
<div class="c" style="left:177px">Standing Order</div>
<div class="c n" style="left:357px">7760</div>
<div class="c n" style="left:517px">£497.20</div>
<div class="c" style="left:697px">Paid</div>
<div class="c n" style="left:767px">£550.00</div>
</div>
<div class="row" style="top:331px;height:42px"><div class="rh" style="height:42px"></div>
<div class="c n" style="left:21.799999999999997px">12/01/2017</div>
<div class="c" style="left:89.2px">Balance<br>Brought<br>Forward</div>
<div class="c" style="left:177px">Account<br>Transfer</div>
<div class="c n" style="left:607px">£550.00</div>
<div class="c" style="left:697px">Unallocated</div>
<div class="c n" style="left:767px">£550.00</div>
</div>
<div class="row alt" style="top:373px;height:42px"><div class="rh" style="height:42px"></div></div>
<div class="a" style="left:852px;top:0;width:17px;height:374px;background:#f0f0f0"></div>
<svg class="a" style="left:852px;top:0" width="18" height="19" viewBox="0 0 18 19"><path d="M5.2 11.3 L9 7.5 L12.8 11.3" fill="none" stroke="#505050" stroke-width="1.8"/></svg>
<div class="a" style="left:854px;top:237px;width:14px;height:105px;background:#c1c1c1"></div>
<!-- /GRIDBODY -->
</div>
<div class="a" style="left:18px;top:403px;width:828px;height:122px;border:3px solid #ea1820"></div>
</body>
</html>
